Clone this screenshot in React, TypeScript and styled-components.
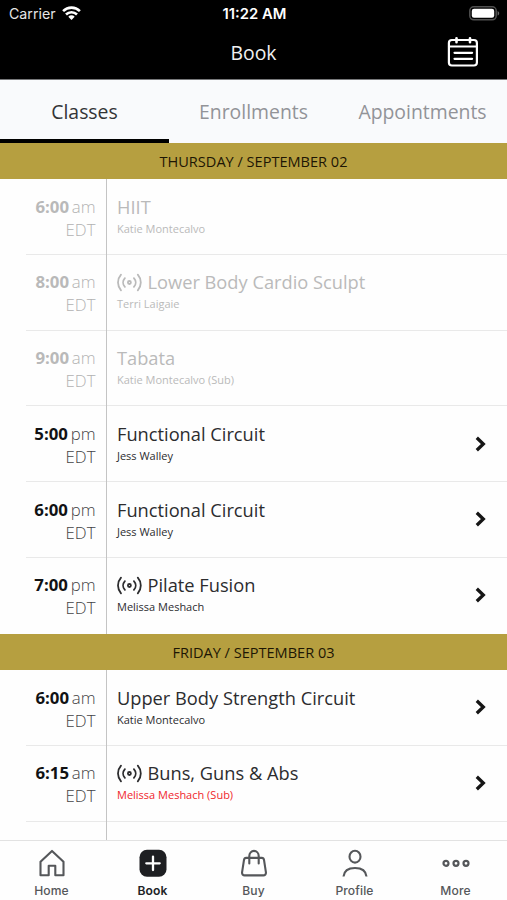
import React from "react";
import styled, { createGlobalStyle } from "styled-components";

const GlobalStyle = createGlobalStyle`
  *, *::before, *::after { box-sizing: border-box; }
  body { margin: 0; background: #fff; font-family: "Open Sans", "Noto Sans", sans-serif; }
`;

const Screen = styled.div`
  width: 507px;
  height: 900px;
  display: flex;
  flex-direction: column;
  overflow: hidden;
  background: #fefefe;
`;

const Header = styled.header`
  flex: none;
  height: 79.5px;
  border-bottom: 1px solid #77787a;
  background: #000;
  color: #fff;
`;

const StatusBar = styled.div`
  display: grid;
  grid-template-columns: 1fr auto 1fr;
  align-items: center;
  height: 27px;
  padding: 0 7px 0 9px;
  font-family: Inter, "Liberation Sans", sans-serif;
`;

const Carrier = styled.div`
  display: flex;
  align-items: center;
  gap: 6px;
  font-size: 14.2px;
  color: #e6e6e6;

  svg {
    margin-bottom: 2px;
  }
`;

const Clock = styled.div`
  font-size: 14.8px;
  font-weight: 600;
`;

const BatterySlot = styled.div`
  display: flex;
  justify-content: flex-end;
`;

const TitleBar = styled.div`
  display: grid;
  grid-template-columns: 1fr auto 1fr;
  align-items: center;
  height: 50px;
  padding-right: 28px;
  padding-left: 28px;
`;

const ScreenTitle = styled.h1`
  grid-column: 2;
  margin: 0;
  padding-top: 2px;
  font-size: 19.4px;
  font-weight: 400;
  line-height: 26px;
  color: #f0f0f0;
`;

const CalendarButton = styled.button`
  justify-self: end;
  display: flex;
  padding: 0;
  border: 0;
  background: none;
`;

const Tabs = styled.nav`
  flex: none;
  display: grid;
  grid-template-columns: repeat(3, 1fr);
  height: 63px;
  background: #f9fafc;
`;

const Tab = styled.button<{ $active?: boolean }>`
  padding: 5px 0 0;
  border: 0;
  border-bottom: 4px solid ${(p) => (p.$active ? "#000" : "transparent")};
  background: none;
  font: 400 19.4px/26px "Open Sans", sans-serif;
  color: ${(p) => (p.$active ? "#333436" : "#929398")};
`;

const Schedule = styled.main`
  flex: 1;
  min-height: 0;
  overflow: hidden;
`;

const DayBand = styled.h2`
  display: flex;
  align-items: center;
  justify-content: center;
  height: 36.5px;
  margin: 0;
  background: #b69f40;
  font-size: 14.55px;
  font-weight: 400;
  color: #1d1604;
`;

const ClassRow = styled.div<{ $past?: boolean }>`
  display: grid;
  grid-template-columns: 107.4px 1fr auto;
  height: 75.75px;
  color: ${(p) => (p.$past ? "#bababa" : "#2c2c2e")};
  background: linear-gradient(#e9e9e9, #e9e9e9) 26px 100% / 100% 1px no-repeat;

  &:last-child {
    background: none;
  }
`;

const TimeCell = styled.div<{ $past?: boolean }>`
  padding: 15.500px 10.9px 0 0;
  border-right: 1px solid #c4c4c4;
  text-align: right;
  font-size: 16.8px;
  font-weight: 300;
  line-height: 23px;
  color: ${(p) => (p.$past ? "#b2b2b2" : "#434345")};
`;

const Hour = styled.b<{ $past?: boolean }>`
  margin-right: 2.8px;
  font-weight: 700;
  color: ${(p) => (p.$past ? "#b9b9b9" : "#111214")};
`;

const Details = styled.div`
  padding: 15.5px 0 0 9.6px;
`;

const ClassName = styled.div`
  display: flex;
  align-items: center;
  gap: 5.5px;
  font-size: 18.25px;
  line-height: 24px;
  white-space: nowrap;
`;

const Instructor = styled.div<{ $substitute?: boolean }>`
  margin-top: 2px;
  font-size: 11px;
  line-height: 16px;
  color: ${(p) => (p.$substitute ? "#f0262b" : "inherit")};
`;

const ChevronSlot = styled.div`
  align-self: center;
  display: flex;
  padding: 0 20px 1px 0;
`;

const BottomNav = styled.nav`
  flex: none;
  display: grid;
  grid-template-columns: repeat(5, 1fr);
  height: 60px;
  padding: 0 1px;
  border-top: 1px solid #e2e2e2;
  background: #fefefe;
`;

const NavItem = styled.button<{ $active?: boolean }>`
  display: flex;
  flex-direction: column;
  align-items: center;
  gap: 6px;
  padding: 8px 0 0;
  border: 0;
  background: none;
  font: ${(p) => (p.$active ? 600 : 500)} 12.1px/15px Inter, sans-serif;
  letter-spacing: 0.1px;
  color: ${(p) => (p.$active ? "#222326" : "#55575a")};
`;

const WifiIcon = () => (
  <svg width="19" height="14" viewBox="0 0 19 14" fill="none" stroke="#fff" strokeWidth="2.600">
    <path d="M1.1 5.100a12 12 0 0 1 16.8 0" />
    <path d="M4 8.500a7.800 7.800 0 0 1 11 0" />
    <path d="M9.500 14 6.300 10.700a4.500 4.500 0 0 1 6.400 0Z" fill="#fff" stroke="none" />
  </svg>
);

const BatteryIcon = () => (
  <svg width="31" height="15" viewBox="0 0 31 15">
    <rect x="0.8" y="0.8" width="26.4" height="13" rx="4" fill="none" stroke="#505050" strokeWidth="1.5" />
    <rect x="2.8" y="2.8" width="22.4" height="9" rx="2.2" fill="#fff" />
    <path d="M28.6 5v4.6c1-.4 1.6-1.3 1.6-2.3S29.6 5.4 28.6 5Z" fill="#666" />
  </svg>
);

const CalendarIcon = () => (
  <svg width="32" height="32" viewBox="0 0 32 32" fill="none" stroke="#fff" strokeWidth="2.2" strokeLinecap="round">
    <rect x="1.9" y="4" width="28" height="25.500" rx="3" />
    <path d="M2 10.500h28M7.500 16.800h17.600M7.500 22.800h17.600" />
    <path d="M9.500 2.300v4M23 2.300v4" strokeWidth="2.600" />
  </svg>
);

const LiveIcon = () => (
  <svg width="25" height="20" viewBox="0 0 25 20" fill="none" stroke="currentColor" strokeWidth="1.800" strokeLinecap="round">
    <circle cx="12.4" cy="10.500" r="1.500" />
    <path d="M4 2.700c-4 4.600-4 11 0 15.600M20.800 2.700c4 4.600 4 11 0 15.600" />
    <path d="M7.900 6.100c-2.400 2.600-2.400 6.200 0 8.800M16.900 6.100c2.400 2.600 2.400 6.200 0 8.800" />
  </svg>
);

const ChevronIcon = () => (
  <svg width="12" height="16" viewBox="0 0 12 16" fill="none" stroke="#151515" strokeWidth="3.3">
    <path d="m1.800 1.700 6.500 6.300-6.500 6.300" />
  </svg>
);

const HomeIcon = () => (
  <svg width="28" height="28" viewBox="0 0 28 28" fill="none" stroke="currentColor" strokeWidth="2.1" strokeLinejoin="round">
    <path d="M2.500 12.700 14 1.900l11.500 10.800v13.600h-8.200v-9.600h-6.600v9.600H2.500Z" />
  </svg>
);

const BookIcon = () => (
  <svg width="28" height="28" viewBox="0 0 28 28">
    <rect x="0.5" y="0.8" width="27" height="27" rx="7.5" fill="#1e1f22" />
    <path d="M14 7.600v13.400M7.300 14.300h13.400" stroke="#fff" strokeWidth="2.300" strokeLinecap="round" />
  </svg>
);

const BagIcon = () => (
  <svg width="28" height="28" viewBox="0 0 28 28" fill="none" stroke="currentColor" strokeWidth="2.1" strokeLinecap="round" strokeLinejoin="round">
    <path d="M6.200 8.900h15.600c1.300 0 2 .7 2.200 2l1.900 12.300c.3 1.900-.8 3.200-2.600 3.200H4.700c-1.800 0-2.900-1.300-2.600-3.200L4 10.900c.2-1.300.9-2 2.200-2Z" />
    <path d="M9.300 14.500V7a4.700 5.100 0 0 1 9.400 0v7.500" />
  </svg>
);

const ProfileIcon = () => (
  <svg width="28" height="28" viewBox="0 0 28 28" fill="none" stroke="currentColor" strokeWidth="2.1">
    <ellipse cx="14" cy="7.700" rx="5.500" ry="5.900" />
    <path d="M2.500 27.500c.6-5.600 4.600-8.500 11.500-8.500s10.900 2.900 11.500 8.500" />
  </svg>
);

const MoreIcon = () => (
  <svg width="28" height="28" viewBox="0 0 28 28" fill="none" stroke="currentColor" strokeWidth="2.2">
    <circle cx="4" cy="14.300" r="2.500" />
    <circle cx="14" cy="14.300" r="2.500" />
    <circle cx="24" cy="14.300" r="2.500" />
  </svg>
);

type Session = {
  hour: string;
  period: string;
  name: string;
  instructor: string;
  live?: boolean;
  past?: boolean;
  substitute?: boolean;
};

const days: { label: string; continues?: boolean; sessions: Session[] }[] = [
  {
    label: "THURSDAY / SEPTEMBER 02",
    sessions: [
      { hour: "6:00", period: "am", name: "HIIT", instructor: "Katie Montecalvo", past: true },
      { hour: "8:00", period: "am", name: "Lower Body Cardio Sculpt", instructor: "Terri Laigaie", live: true, past: true },
      { hour: "9:00", period: "am", name: "Tabata", instructor: "Katie Montecalvo (Sub)", past: true },
      { hour: "5:00", period: "pm", name: "Functional Circuit", instructor: "Jess Walley" },
      { hour: "6:00", period: "pm", name: "Functional Circuit", instructor: "Jess Walley" },
      { hour: "7:00", period: "pm", name: "Pilate Fusion", instructor: "Melissa Meshach", live: true },
    ],
  },
  {
    label: "FRIDAY / SEPTEMBER 03",
    continues: true,
    sessions: [
      { hour: "6:00", period: "am", name: "Upper Body Strength Circuit", instructor: "Katie Montecalvo" },
      { hour: "6:15", period: "am", name: "Buns, Guns & Abs", instructor: "Melissa Meshach (Sub)", live: true, substitute: true },
    ],
  },
];

const navItems = [
  { label: "Home", icon: <HomeIcon /> },
  { label: "Book", icon: <BookIcon />, active: true },
  { label: "Buy", icon: <BagIcon /> },
  { label: "Profile", icon: <ProfileIcon /> },
  { label: "More", icon: <MoreIcon /> },
];

const SessionRow = ({ session }: { session: Session }) => (
  <ClassRow $past={session.past}>
    <TimeCell $past={session.past}>
      <Hour $past={session.past}>{session.hour}</Hour>
      {session.period}
      <div>EDT</div>
    </TimeCell>
    <Details>
      <ClassName>
        {session.live && <LiveIcon />}
        {session.name}
      </ClassName>
      <Instructor $substitute={session.substitute}>{session.instructor}</Instructor>
    </Details>
    {!session.past && (
      <ChevronSlot>
        <ChevronIcon />
      </ChevronSlot>
    )}
  </ClassRow>
);

export default function App() {
  return (
    <>
      <GlobalStyle />
      <Screen>
        <Header>
          <StatusBar>
            <Carrier>
              Carrier
              <WifiIcon />
            </Carrier>
            <Clock>11:22 AM</Clock>
            <BatterySlot>
              <BatteryIcon />
            </BatterySlot>
          </StatusBar>
          <TitleBar>
            <ScreenTitle>Book</ScreenTitle>
            <CalendarButton aria-label="Calendar">
              <CalendarIcon />
            </CalendarButton>
          </TitleBar>
        </Header>
        <Tabs>
          <Tab $active>Classes</Tab>
          <Tab>Enrollments</Tab>
          <Tab>Appointments</Tab>
        </Tabs>
        <Schedule>
          {days.map((day) => (
            <section key={day.label}>
              <DayBand>{day.label}</DayBand>
              {day.sessions.map((session) => (
                <SessionRow key={session.hour + session.period} session={session} />
              ))}
              {day.continues && (
                <ClassRow>
                  <TimeCell />
                </ClassRow>
              )}
            </section>
          ))}
        </Schedule>
        <BottomNav>
          {navItems.map((item) => (
            <NavItem key={item.label} $active={item.active}>
              {item.icon}
              {item.label}
            </NavItem>
          ))}
        </BottomNav>
      </Screen>
    </>
  );
}
